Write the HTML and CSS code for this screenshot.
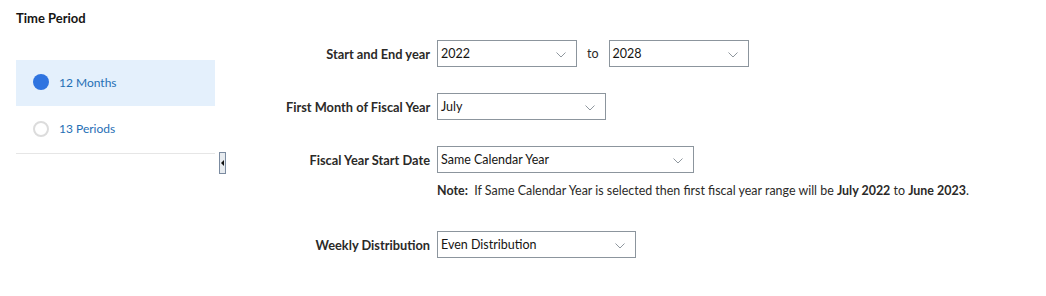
FILE: index.html
```html
<!DOCTYPE html>
<html lang="en">
<head>
<meta charset="utf-8">
<title>Time Period</title>
<link rel="stylesheet" href="styles.css">
</head>
<body>
<div class="page">
  <h2 class="title">Time Period</h2>
  <div class="layout">
    <div class="side">
      <ul class="options">
        <li class="option selected"><span class="radio on"></span><span class="opt-label">12 Months</span></li>
        <li class="option"><span class="radio"></span><span class="opt-label">13 Periods</span></li>
      </ul>
      <div class="handle"><span class="tri"></span></div>
    </div>
    <div class="form">
      <div class="row r1">
        <label class="lbl">Start and End year</label>
        <div class="ctrls">
          <div class="select w140"><span>2022</span><svg class="chev" width="10" height="6" viewBox="0 0 10 6"><path d="M0.5 0.5 L5 5 L9.5 0.5" fill="none" stroke="#8f979e" stroke-width="1"/></svg></div>
          <span class="to">to</span>
          <div class="select w140"><span>2028</span><svg class="chev" width="10" height="6" viewBox="0 0 10 6"><path d="M0.5 0.5 L5 5 L9.5 0.5" fill="none" stroke="#8f979e" stroke-width="1"/></svg></div>
        </div>
      </div>
      <div class="row r2">
        <label class="lbl">First Month of Fiscal Year</label>
        <div class="ctrls">
          <div class="select w169"><span>July</span><svg class="chev" width="10" height="6" viewBox="0 0 10 6"><path d="M0.5 0.5 L5 5 L9.5 0.5" fill="none" stroke="#8f979e" stroke-width="1"/></svg></div>
        </div>
      </div>
      <div class="row r3">
        <label class="lbl">Fiscal Year Start Date</label>
        <div class="ctrls">
          <div class="select w257"><span>Same Calendar Year</span><svg class="chev" width="10" height="6" viewBox="0 0 10 6"><path d="M0.5 0.5 L5 5 L9.5 0.5" fill="none" stroke="#8f979e" stroke-width="1"/></svg></div>
        </div>
      </div>
      <div class="row note-row">
        <span class="lbl"></span>
        <p class="note"><b>Note:</b>&nbsp;&nbsp;If Same Calendar Year is selected then first fiscal year range will be <b>July 2022</b> to <b>June 2023</b>.</p>
      </div>
      <div class="row r4">
        <label class="lbl">Weekly Distribution</label>
        <div class="ctrls">
          <div class="select w199"><span>Even Distribution</span><svg class="chev" width="10" height="6" viewBox="0 0 10 6"><path d="M0.5 0.5 L5 5 L9.5 0.5" fill="none" stroke="#8f979e" stroke-width="1"/></svg></div>
        </div>
      </div>
    </div>
  </div>
</div>
</body>
</html>
```

FILE: styles.css
```css
* { box-sizing: border-box; }
html, body { margin: 0; padding: 0; background: #fff; }
body {
  font-family: Lato, "Noto Sans", "Liberation Sans", sans-serif;
  color: #161513;
  width: 1046px;
  height: 296px;
  overflow: hidden;
}
.page { padding: 0; }
.title {
  margin: 10px 0 0 16px;
  font-size: 13px;
  line-height: 16px;
  font-weight: 700;
  color: #161513;
}
.layout {
  display: flex;
  align-items: flex-start;
}
.side {
  position: relative;
  margin-left: 16px;
  width: 199px;
  padding-top: 34px;
  flex: none;
}
.options {
  list-style: none;
  margin: 0;
  padding: 0;
  border-bottom: 1px solid #e6e6e6;
}
.option {
  display: flex;
  align-items: center;
  height: 46px;
  padding-left: 17px;
  padding-bottom: 2px;
}
.option + .option { height: 47px; }
.option.selected { background: #e4f0fc; }
.radio {
  width: 16px;
  height: 16px;
  border-radius: 50%;
  border: 2px solid #dcdcdc;
  background: #fff;
  flex: none;
}
.radio.on {
  border: none;
  background: #2f74e0;
}
.opt-label {
  margin-left: 10px;
  font-size: 12px;
  color: #1f6fb5;
}
.handle {
  position: absolute;
  left: 203px;
  top: 126px;
  width: 7px;
  height: 22px;
  border: 1px solid #7b8ba0;
  background: #e7ebef;
}
.tri {
  position: absolute;
  left: 1px;
  top: 7px;
  width: 0;
  height: 0;
  border-top: 3px solid transparent;
  border-bottom: 3px solid transparent;
  border-right: 3px solid #111;
}
.form {
  margin-left: 71px;
  padding-top: 14px;
  display: flex;
  flex-direction: column;
}
.row {
  display: grid;
  grid-template-columns: 144px auto;
  column-gap: 7px;
  align-items: center;
}
.r2, .r3 { margin-top: 26px; }
.note-row { margin-top: 10px; }
.r4 { margin-top: 32px; }
.lbl {
  text-align: right;
  font-size: 12.8px;
  font-weight: 700;
  color: #2b2a28;
  white-space: nowrap;
}
.ctrls {
  display: flex;
  align-items: center;
}
.select {
  display: flex;
  align-items: center;
  justify-content: space-between;
  height: 27px;
  border: 1px solid #8c959d;
  background: #fff;
  padding: 0 10px 0 3px;
  font-size: 12.5px;
  color: #161513;
}
.w140 { width: 140px; }
.w169 { width: 169px; }
.w257 { width: 257px; }
.w199 { width: 199px; }
.chev { display: block; margin-top: 2px; }
.to {
  margin: 0 10px 0 10px;
  font-size: 12.5px;
  color: #2b2a28;
}
.note {
  margin: 0;
  font-size: 12.45px;
  line-height: 16px;
  color: #2b2a28;
  white-space: nowrap;
}
.note b { font-weight: 700; }
```
